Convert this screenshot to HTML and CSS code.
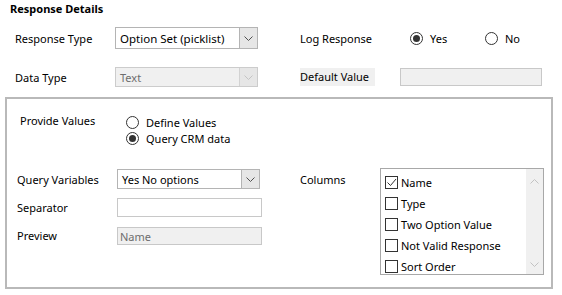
FILE: index.html
```html
<!DOCTYPE html>
<html lang="en">
<head>
    <meta charset="UTF-8">
    <title>Response Details</title>
    <link rel="stylesheet" href="styles.css">
</head>
<body>

    <div class="panel">
        <div class="title">Response Details</div>

        <div class="top-grid">
            <div class="lbl">Response Type</div>
            <div class="combo tall">
                <span class="value">Option Set (picklist)</span>
                <span class="drop"><svg width="9" height="5" viewBox="0 0 9 5"><path d="M0.5 0.5 L4.5 4.5 L8.5 0.5" fill="none" stroke="#505050"/></svg></span>
            </div>
            <div class="lbl">Log Response</div>
            <div class="radios">
                <span class="radio-opt"><span class="radio on"></span>Yes</span>
                <span class="radio-opt"><span class="radio"></span>No</span>
            </div>

            <div class="lbl">Data Type</div>
            <div class="combo disabled">
                <span class="value">Text</span>
                <span class="drop"><svg width="9" height="5" viewBox="0 0 9 5"><path d="M0.5 0.5 L4.5 4.5 L8.5 0.5" fill="none" stroke="#c4c4c4"/></svg></span>
            </div>
            <div class="lbl"><span class="shaded">Default Value</span></div>
            <div class="field disabled wide"></div>
        </div>

        <div class="group">
            <div class="provide">
                <div class="lbl provide-lbl">Provide Values</div>
                <div class="radio-stack">
                    <span class="radio-opt"><span class="radio"></span>Define Values</span>
                    <span class="radio-opt"><span class="radio on"></span>Query CRM data</span>
                </div>
            </div>

            <div class="query">
                <div class="query-form">
                    <div class="lbl">Query Variables</div>
                    <div class="combo">
                        <span class="value">Yes No options</span>
                        <span class="drop"><svg width="9" height="5" viewBox="0 0 9 5"><path d="M0.5 0.5 L4.5 4.5 L8.5 0.5" fill="none" stroke="#505050"/></svg></span>
                    </div>
                    <div class="lbl">Separator</div>
                    <div class="field"></div>
                    <div class="lbl">Preview</div>
                    <div class="field disabled"><span class="value">Name</span></div>
                </div>

                <div class="columns">
                    <div class="lbl columns-lbl">Columns</div>
                    <div class="listbox">
                        <div class="items">
                            <div class="item"><span class="check on"><svg width="11" height="11" viewBox="0 0 11 11"><path d="M1.5 5.5 L4.5 8.5 L10 2" fill="none" stroke="#333" stroke-width="1"/></svg></span>Name</div>
                            <div class="item"><span class="check"></span>Type</div>
                            <div class="item"><span class="check"></span>Two Option Value</div>
                            <div class="item"><span class="check"></span>Not Valid Response</div>
                            <div class="item"><span class="check"></span>Sort Order</div>
                        </div>
                        <div class="scrollbar">
                            <svg width="9" height="5" viewBox="0 0 9 5"><path d="M0.5 4.5 L4.5 0.5 L8.5 4.5" fill="none" stroke="#c2c2c2"/></svg>
                            <svg width="9" height="5" viewBox="0 0 9 5"><path d="M0.5 0.5 L4.5 4.5 L8.5 0.5" fill="none" stroke="#c2c2c2"/></svg>
                        </div>
                    </div>
                </div>
            </div>
        </div>
    </div>

</body>
</html>
```

FILE: styles.css
```css
/* Global Styles */
* {
    margin: 0;
    padding: 0;
    box-sizing: border-box;
}

body {
    background-color: #fff;
    font-family: "Noto Sans", "Open Sans", Arial, sans-serif;
    font-size: 11px;
    color: #000;
}

.panel {
    width: 562px;
    height: 295px;
    padding-top: 1px;
}

.title {
    font-weight: bold;
    height: 16px;
    line-height: 16px;
    padding-left: 10px;
}

.lbl {
    display: flex;
    align-items: center;
    white-space: nowrap;
}

.shaded {
    background-color: #f0f0f0;
    padding: 1px 6px 1px 0;
    line-height: 16px;
}

/* Top section */
.top-grid {
    display: grid;
    grid-template-columns: 100px 185px 100px 142px;
    grid-template-rows: 22px 20px;
    row-gap: 18px;
    margin-top: 10px;
    padding-left: 15px;
}

.combo {
    display: flex;
    width: 143px;
    border: 1px solid #b4b4b4;
    background-color: #fff;
}

.combo .value {
    flex: 1;
    display: flex;
    align-items: center;
    padding-left: 4px;
}

.combo .drop {
    width: 18px;
    display: flex;
    align-items: center;
    justify-content: center;
    background-color: #e6e6e6;
    border-left: 1px solid #b4b4b4;
}

.combo.tall .value {
    font-size: 11.5px;
}

.combo.disabled {
    background-color: #f0f0f0;
    border-color: #cccccc;
    color: #6d6d6d;
}

.combo.disabled .drop {
    background-color: #e6e6e6;
    border-left-color: #d2d2d2;
}

.field {
    width: 145px;
    border: 1px solid #c8c8c8;
    background-color: #fff;
    display: flex;
    align-items: center;
}

.field.wide {
    width: 142px;
    margin-top: 1px;
    height: 18px;
}

.field.disabled {
    background-color: #f0f0f0;
    color: #6d6d6d;
}

.field .value {
    padding-left: 2px;
}

/* Radio buttons */
.radios {
    display: flex;
    align-items: center;
    padding-left: 10px;
}

.radio-opt {
    display: flex;
    align-items: center;
    white-space: nowrap;
}

.radios .radio-opt {
    width: 75px;
    flex-shrink: 0;
}

.radio {
    width: 13px;
    height: 13px;
    border: 1px solid #333;
    border-radius: 50%;
    background-color: #fff;
    margin-right: 7px;
    display: flex;
    align-items: center;
    justify-content: center;
}

.radio.on::after {
    content: "";
    width: 7px;
    height: 7px;
    border-radius: 50%;
    background-color: #333;
}

/* Group box */
.group {
    margin: 10px 0 0 5px;
    width: 548px;
    height: 192px;
    border: 2px solid #b9b9b9;
}

.provide {
    display: flex;
    margin-top: 14px;
    padding-left: 13px;
}

.provide-lbl {
    width: 106px;
    height: 16px;
    align-items: flex-start;
}

.radio-stack {
    display: flex;
    flex-direction: column;
    margin-top: 1px;
}

.radio-stack .radio-opt {
    height: 16px;
}

.query {
    display: flex;
    margin-top: 23px;
    padding-left: 10px;
}

.query-form {
    display: grid;
    grid-template-columns: 100px 145px;
    grid-template-rows: 20px 19px 19px;
    row-gap: 9px;
    width: 283px;
}

.query-form .field:last-child {
    margin-top: 1px;
}

.columns {
    display: flex;
    margin-top: -1px;
}

.columns-lbl {
    width: 80px;
    height: 22px;
}

.listbox {
    display: flex;
    width: 164px;
    height: 107px;
    border: 1px solid #a8a8a8;
    background-color: #fff;
}

.items {
    flex: 1;
    padding: 3px 0 0 4px;
}

.item {
    display: flex;
    align-items: center;
    height: 21px;
    white-space: nowrap;
}

.check {
    width: 13px;
    height: 13px;
    border: 1px solid #333;
    background-color: #fff;
    margin-right: 3px;
    display: flex;
    align-items: center;
    justify-content: center;
}

.scrollbar {
    width: 17px;
    background-color: #f0f0f0;
    display: flex;
    flex-direction: column;
    justify-content: space-between;
    align-items: center;
    padding: 10px 0 7px;
}
```
